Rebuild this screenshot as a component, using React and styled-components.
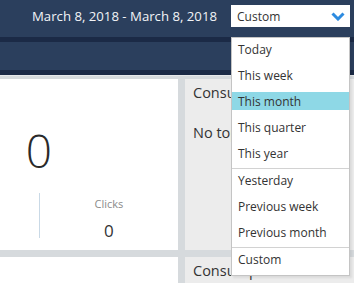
import React, { useState } from 'react'
import styled, { createGlobalStyle } from 'styled-components'

const GlobalStyle = createGlobalStyle`
  html, body {
    margin: 0;
    padding: 0;
    background: #d6dadd;
    overflow: hidden;
  }
  body {
    font-family: "Open Sans", "Noto Sans", sans-serif;
    color: #333;
  }
`

const Page = styled.div`
  width: 354px;
  height: 283px;
  overflow: hidden;
  background: #d6dadd;
`

const Header = styled.header`
  position: relative;
  height: 42px;
  box-sizing: border-box;
  background: #2b3f5d;
  border-bottom: 5px solid #1b2a46;
  display: flex;
  justify-content: flex-end;
  align-items: flex-start;
  padding: 5px 4px 0 0;
  z-index: 5;
`

const DateRange = styled.div`
  color: #f2f4f7;
  font-size: 13.2px;
  line-height: 22px;
  margin-right: 14px;
  white-space: nowrap;
`

const SelectWrap = styled.div`
  position: relative;
  width: 119px;
`

const SelectBox = styled.div`
  height: 22px;
  background: #fff;
  display: flex;
  align-items: center;
  justify-content: space-between;
  padding: 0 5px 0 6px;
  box-sizing: border-box;
  font-size: 12px;
  color: #333;
`

const Menu = styled.ul`
  position: absolute;
  top: 32px;
  left: 0;
  width: 119px;
  margin: 0;
  padding: 0;
  list-style: none;
  background: #fff;
  border: 1px solid #c4c4c4;
  box-sizing: border-box;
  box-shadow: 2px 2px 2px rgba(0, 0, 0, 0.08);
`

const Group = styled.li`
  display: flex;
  flex-direction: column;
  & + & {
    border-top: 1px solid #d2d2d2;
  }
  &:last-child {
    padding-bottom: 1px;
  }
`

const Option = styled.div`
  height: 18px;
  line-height: 19px;
  margin: 2px 0 6px;
  padding-left: 6px;
  font-size: 12px;
  color: #333;
  background: ${({ active }) => (active ? '#8ed8e6' : 'transparent')};
`

const SubBar = styled.div`
  height: 33px;
  box-sizing: border-box;
  background: #2b3f5d;
  border-bottom: 5px solid #1b2a46;
`

const Content = styled.main`
  border-top: 1px solid #e6e8ea;
  padding-top: 3px;
  display: grid;
  grid-template-columns: 178px 1fr;
  grid-auto-rows: 171px;
  gap: 7px;
`

const Card = styled.section`
  background: ${({ muted }) => (muted ? '#ececec' : '#fff')};
  padding: ${({ muted }) => (muted ? '3px 8px' : '0')};
  overflow: hidden;
  white-space: nowrap;
`

const BigNumber = styled.div`
  width: 78px;
  margin-top: 48px;
  text-align: center;
  font-size: 46px;
  line-height: 46px;
  font-weight: 300;
  color: #2a2a2a;
`

const StatsRow = styled.div`
  display: flex;
  margin-top: 20px;
  height: 45px;
`

const StatCell = styled.div`
  width: ${({ w }) => w}px;
  padding-top: 4px;
  text-align: center;
  border-right: ${({ divider }) => (divider ? '1px solid #c9d9e6' : 'none')};
`

const StatLabel = styled.div`
  font-size: 11px;
  line-height: 14px;
  color: #8a8a8a;
`

const StatValue = styled.div`
  margin-top: 10px;
  font-size: 17px;
  line-height: 20px;
  color: #333;
`

const CardTitle = styled.h2`
  margin: 0;
  font-size: 14.5px;
  font-weight: 400;
  line-height: 22px;
  color: #333;
`

const Empty = styled.p`
  margin: 18px 0 0;
  font-size: 14.5px;
  line-height: 22px;
  color: #333;
`

const Chevron = () => (
  <svg width="14" height="9" viewBox="0 0 14 9">
    <path d="M1.5 1.5 L7 7 L12.5 1.5" fill="none" stroke="#2d8be0" strokeWidth="3" />
  </svg>
)

const groups = [
  ['Today', 'This week', 'This month', 'This quarter', 'This year'],
  ['Yesterday', 'Previous week', 'Previous month'],
  ['Custom']
]

export default function App() {
  const [active] = useState('This month')

  return (
    <Page>
      <GlobalStyle />
      <Header>
        <DateRange>March 8, 2018 - March 8, 2018</DateRange>
        <SelectWrap>
          <SelectBox>
            <span>Custom</span>
            <Chevron />
          </SelectBox>
          <Menu>
            {groups.map((g, i) => (
              <Group key={i}>
                {g.map(label => (
                  <Option key={label} active={label === active}>{label}</Option>
                ))}
              </Group>
            ))}
          </Menu>
        </SelectWrap>
      </Header>
      <SubBar />
      <Content>
        <Card>
          <BigNumber>0</BigNumber>
          <StatsRow>
            <StatCell w={39} divider />
            <StatCell w={139}>
              <StatLabel>Clicks</StatLabel>
              <StatValue>0</StatValue>
            </StatCell>
          </StatsRow>
        </Card>
        <Card muted>
          <CardTitle>Consumption by topic</CardTitle>
          <Empty>No topics available</Empty>
        </Card>
        <Card />
        <Card muted>
          <CardTitle>Consumption</CardTitle>
        </Card>
      </Content>
    </Page>
  )
}
